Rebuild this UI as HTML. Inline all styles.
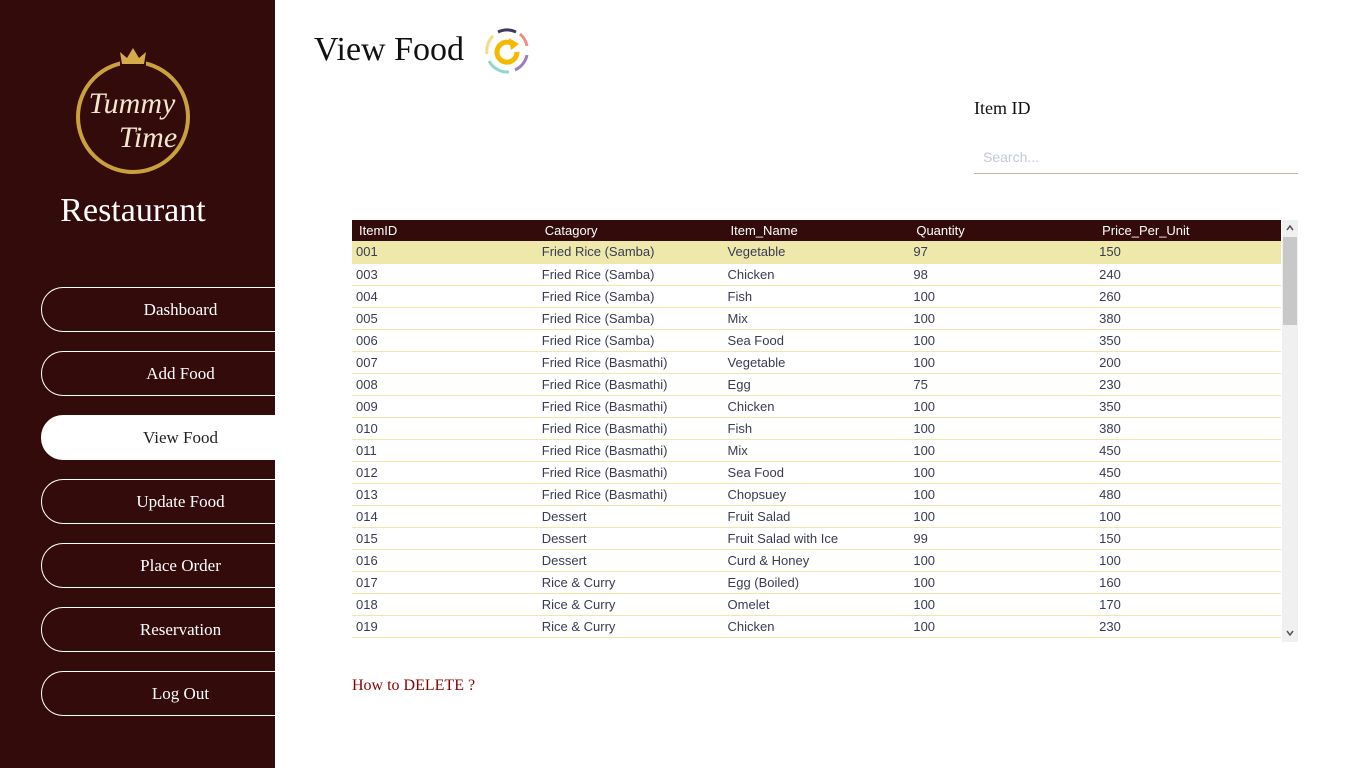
<!DOCTYPE html>
<html><head><meta charset="utf-8"><style>
*{margin:0;padding:0;box-sizing:border-box}
body{width:1366px;height:768px;background:#fff;position:relative;overflow:hidden;font-family:"Liberation Sans",sans-serif}
.side{position:absolute;left:0;top:0;width:275px;height:768px;background:#340b0b;overflow:hidden}
.rest{position:absolute;left:0;width:266px;top:192px;text-align:center;color:#fff;font-family:"Liberation Serif",serif;font-size:34px}
.btn{position:absolute;left:41px;width:234px;height:45px;border:1px solid #fff;border-right:none;border-radius:22px 0 0 22px;color:#fff;font-family:"Liberation Serif",serif;font-size:17px;text-align:center;line-height:43px;padding-left:44px}
.btn.act{background:#fff;color:#222}
h1{position:absolute;left:314px;top:31px;font-family:"Liberation Serif",serif;font-weight:normal;font-size:34px;color:#111}
.lbl{position:absolute;left:974px;top:98px;font-family:"Liberation Serif",serif;font-size:18px;color:#111}
.search{position:absolute;left:974px;top:146px;width:324px;height:28px;border-bottom:1px solid #c9b69a;color:#c3cad6;font-size:14px;padding-left:9px;line-height:22px}
table{position:absolute;left:352px;top:220px;width:929px;border-collapse:collapse;font-size:13px}
th{background:#340b0b;color:#fff;font-weight:normal;text-align:left;height:21px;padding-left:7px;width:186px}
td{height:22px;padding-left:4px;color:#3a3a55;border-bottom:1px solid #eee8aa}
tr.hl td{background:#eee8aa}
.sb{position:absolute;left:1282px;top:220px;width:16px;height:422px;background:#f0f0f0}
.thumb{position:absolute;left:1px;top:17px;width:14px;height:88px;background:#c8c8c8}
.del{position:absolute;left:352px;top:677px;font-family:"Liberation Serif",serif;font-size:16px;color:#8b0000}
</style></head><body>
<div class="side">
<svg style="position:absolute;left:60px;top:40px" width="150" height="140" viewBox="0 0 150 140">
<circle cx="73" cy="77" r="55" fill="none" stroke="#c9a13c" stroke-width="4"/>
<rect x="60" y="14" width="26" height="12" fill="#340b0b"/>
<path d="M62 24 L60 12 L67 18 L73 8 L79 18 L86 12 L84 24 Z" fill="#d4aa4a"/>
<text x="72" y="73" text-anchor="middle" font-family="Liberation Serif,serif" font-style="italic" font-size="30" fill="#f3e6d0">Tummy</text>
<text x="88" y="107" text-anchor="middle" font-family="Liberation Serif,serif" font-style="italic" font-size="30" fill="#f3e6d0">Time</text>
</svg>
<div class="rest">Restaurant</div>
<div class="btn" style="top:287px">Dashboard</div>
<div class="btn" style="top:351px">Add Food</div>
<div class="btn act" style="top:415px">View Food</div>
<div class="btn" style="top:479px">Update Food</div>
<div class="btn" style="top:543px">Place Order</div>
<div class="btn" style="top:607px">Reservation</div>
<div class="btn" style="top:671px">Log Out</div>
</div>
<h1>View Food</h1>
<svg style="position:absolute;left:484px;top:28px" width="46" height="46" viewBox="0 0 46 46">
<g fill="none" stroke-width="3">
<path d="M14 4 A21 21 0 0 1 32 4" stroke="#3d3a5c"/>
<path d="M36 6 A21 21 0 0 1 43 18" stroke="#ef8f80"/>
<path d="M43 27 A21 21 0 0 1 31 42" stroke="#9b7ec0"/>
<path d="M25 44 A21 21 0 0 1 5 33" stroke="#8fd5d0"/>
<path d="M3 26 A21 21 0 0 1 9 8" stroke="#f6d98a"/>
<path d="M30 17 A10 10 0 1 0 33 24" stroke="#f5b800" stroke-width="5"/>
</g>
<path d="M25 10 L35 16 L27 22 Z" fill="#f5b800"/>
</svg>
<div class="lbl">Item ID</div>
<div class="search">Search...</div>
<table>
<tr><th>ItemID</th><th>Catagory</th><th>Item_Name</th><th>Quantity</th><th>Price_Per_Unit</th></tr>
<tr class="hl"><td>001</td><td>Fried Rice (Samba)</td><td>Vegetable</td><td>97</td><td>150</td></tr>
<tr><td>003</td><td>Fried Rice (Samba)</td><td>Chicken</td><td>98</td><td>240</td></tr>
<tr><td>004</td><td>Fried Rice (Samba)</td><td>Fish</td><td>100</td><td>260</td></tr>
<tr><td>005</td><td>Fried Rice (Samba)</td><td>Mix</td><td>100</td><td>380</td></tr>
<tr><td>006</td><td>Fried Rice (Samba)</td><td>Sea Food</td><td>100</td><td>350</td></tr>
<tr><td>007</td><td>Fried Rice (Basmathi)</td><td>Vegetable</td><td>100</td><td>200</td></tr>
<tr><td>008</td><td>Fried Rice (Basmathi)</td><td>Egg</td><td>75</td><td>230</td></tr>
<tr><td>009</td><td>Fried Rice (Basmathi)</td><td>Chicken</td><td>100</td><td>350</td></tr>
<tr><td>010</td><td>Fried Rice (Basmathi)</td><td>Fish</td><td>100</td><td>380</td></tr>
<tr><td>011</td><td>Fried Rice (Basmathi)</td><td>Mix</td><td>100</td><td>450</td></tr>
<tr><td>012</td><td>Fried Rice (Basmathi)</td><td>Sea Food</td><td>100</td><td>450</td></tr>
<tr><td>013</td><td>Fried Rice (Basmathi)</td><td>Chopsuey</td><td>100</td><td>480</td></tr>
<tr><td>014</td><td>Dessert</td><td>Fruit Salad</td><td>100</td><td>100</td></tr>
<tr><td>015</td><td>Dessert</td><td>Fruit Salad with Ice</td><td>99</td><td>150</td></tr>
<tr><td>016</td><td>Dessert</td><td>Curd &amp; Honey</td><td>100</td><td>100</td></tr>
<tr><td>017</td><td>Rice &amp; Curry</td><td>Egg (Boiled)</td><td>100</td><td>160</td></tr>
<tr><td>018</td><td>Rice &amp; Curry</td><td>Omelet</td><td>100</td><td>170</td></tr>
<tr><td>019</td><td>Rice &amp; Curry</td><td>Chicken</td><td>100</td><td>230</td></tr>
</table>
<div class="sb"><div class="thumb"></div>
<svg style="position:absolute;left:4px;top:5px" width="8" height="6"><path d="M1 5 L4 1 L7 5" fill="none" stroke="#555" stroke-width="1.5"/></svg>
<svg style="position:absolute;left:4px;top:410px" width="8" height="6"><path d="M1 1 L4 5 L7 1" fill="none" stroke="#555" stroke-width="1.5"/></svg>
</div>
<div class="del">How to DELETE ?</div>
</body></html>
